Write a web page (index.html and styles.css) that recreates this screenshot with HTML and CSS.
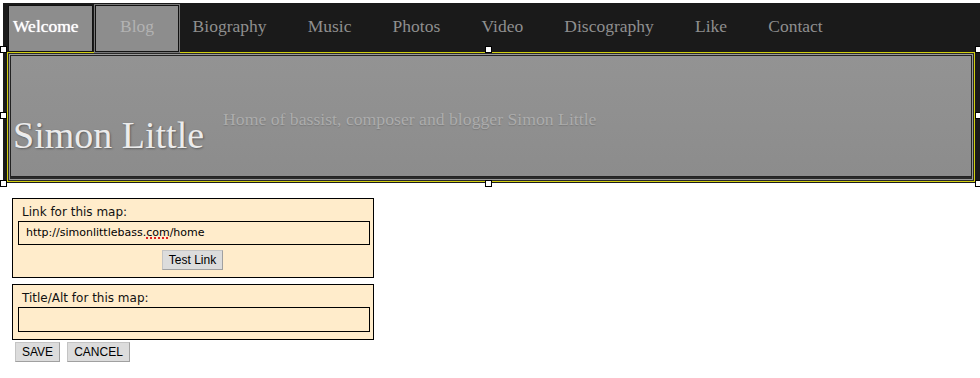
FILE: index.html
```html
<!DOCTYPE html>
<html lang="en">
<head>
    <meta charset="UTF-8">
    <title>Simon Little - Image Map</title>
    <link rel="stylesheet" href="styles.css">
</head>
<body>
    <div class="site-header">
        <ul class="nav">
            <li class="nav-item active">Welcome</li>
            <li class="nav-item current">Blog</li>
            <li class="nav-item">Biography</li>
            <li class="nav-item">Music</li>
            <li class="nav-item">Photos</li>
            <li class="nav-item">Video</li>
            <li class="nav-item">Discography</li>
            <li class="nav-item">Like</li>
            <li class="nav-item">Contact</li>
        </ul>
        <div class="banner">
            <div class="banner-inner">
                <div class="banner-fill">
                    <span class="site-title">Simon Little</span>
                    <span class="tagline">Home of bassist, composer and blogger Simon Little</span>
                </div>
            </div>
        </div>

        <!-- selection handles for the map area -->
        <div class="selection">
            <span class="handle h-tl"></span>
            <span class="handle h-tc"></span>
            <span class="handle h-tr"></span>
            <span class="handle h-ml"></span>
            <span class="handle h-mr"></span>
            <span class="handle h-bl"></span>
            <span class="handle h-bc"></span>
            <span class="handle h-br"></span>
        </div>
    </div>

    <div class="map-editor">
        <div class="map-box">
            <div class="map-label">Link for this map:</div>
            <div class="map-input">http://simonlittlebass.<span class="misspelt">com</span>/home</div>
            <div class="test-row">
                <button class="btn">Test Link</button>
            </div>
        </div>
        <div class="map-box">
            <div class="map-label">Title/Alt for this map:</div>
            <div class="map-input tall"></div>
        </div>
        <div class="actions">
            <button class="btn">SAVE</button>
            <button class="btn">CANCEL</button>
        </div>
    </div>
</body>
</html>
```

FILE: styles.css
```css
body {
    margin: 0;
    background-color: #fff;
    font-family: "DejaVu Sans", Verdana, sans-serif;
}
.site-header {
    position: relative;
    margin: 3px 0 0 3px;
    height: 180px;
    background-color: #1a1a1a;
}
.nav {
    list-style: none;
    margin: 0;
    padding: 2px 0 0 5px;
    display: flex;
    height: 47px;
}
.nav-item {
    font-family: "Liberation Serif", "Times New Roman", serif;
    font-size: 17.5px;
    color: #8f8f8f;
    padding: 0 19.6px 5px;
    line-height: 40px;
    border: 1px solid transparent;
}
.nav-item.active {
    box-sizing: border-box;
    width: 85px;
    height: 47px;
    background-color: #8d8d8d;
    border-color: #111;
    color: #fff;
    padding: 0 0 0 4px;
    text-shadow: 0 0 1px #fff;
}
.nav-item.current {
    box-sizing: border-box;
    width: 84px;
    height: 47px;
    padding: 0;
    text-align: center;
    background-color: #8d8d8d;
    border-color: #111;
    box-shadow: 0 0 0 1px #777;
    color: #b3b3b3;
    margin-left: 2px;
    margin-right: -7px;
}
.banner {
    margin-left: 4px;
    width: 964px;
    height: 126px;
    border: 1px solid #d2cf10;
    padding: 1px;
    background-color: #2a2a2a;
}
.banner-inner {
    height: 124px;
    border: 1px solid #9a9a9a;
}
.banner-fill {
    height: 120px;
    border: 1px solid #222;
    background: linear-gradient(180deg, #939393 0%, #8f8f8f 60%, #8c8c8c 100%);
    display: flex;
    align-items: flex-start;
}
.site-title {
    font-family: "Liberation Serif", Georgia, serif;
    font-size: 38px;
    color: #ececec;
    text-shadow: 1px 1px 2px rgba(0, 0, 0, 0.35);
    margin: 57px 0 0 2px;
}
.tagline {
    font-family: "Liberation Serif", "Times New Roman", serif;
    font-size: 17.7px;
    color: #acacac;
    text-shadow: 0 1px 1px rgba(0, 0, 0, 0.15);
    margin: 53px 0 0 19px;
}

/* handles */
.selection {
    position: absolute;
    left: 0;
    top: 44px;
    width: 976px;
    height: 136px;
}
.handle {
    position: absolute;
    width: 5px;
    height: 5px;
    background: #fff;
    border: 1px solid #000;
}
.h-tl { left: -3px; top: -1px; }
.h-tc { left: 482px; top: -1px; }
.h-tr { right: -3px; top: -1px; }
.h-ml { left: -3px; top: 65px; }
.h-mr { right: -3px; top: 65px; }
.h-bl { left: -3px; bottom: -4px; }
.h-bc { left: 482px; bottom: -4px; }
.h-br { right: -3px; bottom: -4px; }

/* map editor */
.map-editor {
    margin: 15px 0 0 12px;
    width: 362px;
}
.map-box {
    background-color: #ffeccb;
    border: 1px solid #000;
    padding: 6px 3px 7px 5px;
    margin-bottom: 6px;
}
.map-label {
    font-size: 12px;
    color: #111;
    padding-left: 4px;
    line-height: 14px;
    margin-bottom: 2px;
}
.map-input {
    height: 22px;
    border: 1px solid #000;
    background-color: #ffeccb;
    font-size: 11px;
    line-height: 22px;
    padding-left: 7px;
    color: #000;
}
.map-input.tall {
    height: 23px;
}
.misspelt {
    text-decoration: underline dotted #e02020;
    text-decoration-thickness: 2px;
}
.test-row {
    display: flex;
    justify-content: center;
    margin-top: 5px;
}
.btn {
    font-family: "Liberation Sans", Arial, sans-serif;
    font-size: 12px;
    color: #000;
    background-color: #dcdcdc;
    border: 1px solid #c4c4c4;
    border-right-color: #a0a0a0;
    border-bottom-color: #a0a0a0;
    padding: 0 6px;
    height: 20px;
    margin: 0;
}
.test-row .btn {
    margin-right: 3px;
}
.actions {
    display: flex;
    gap: 7px;
    margin: -4px 0 0 3px;
}
```
